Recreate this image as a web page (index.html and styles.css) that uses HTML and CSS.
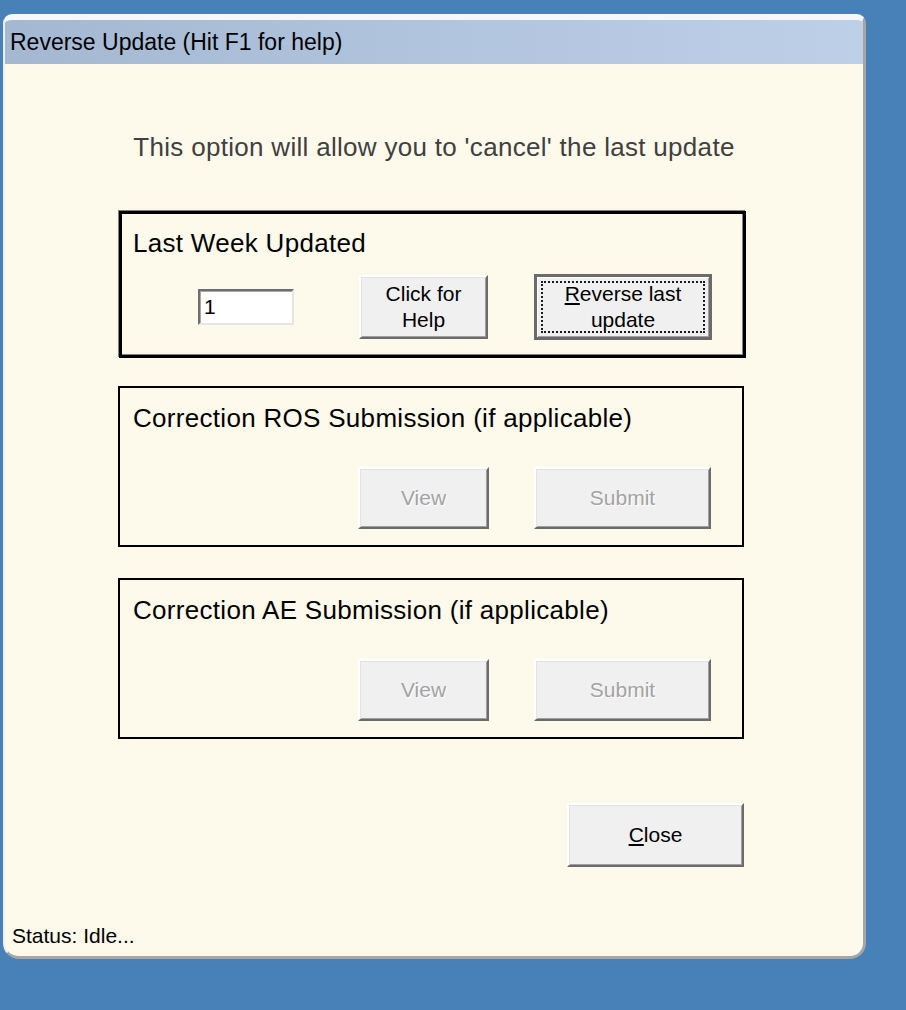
FILE: index.html
```html
<!DOCTYPE html>
<html>
<head>
<meta charset="utf-8">
<title>Reverse Update</title>
<link rel="stylesheet" href="styles.css">
</head>
<body>
<div class="window">
  <div class="titlebar">Reverse Update (Hit F1 for help)</div>
  <div class="client">
    <p class="intro">This option will allow you to 'cancel' the last update</p>

    <div class="group group-focus">
      <div class="group-label">Last Week Updated</div>
      <div class="row row-week">
        <div class="field">1</div>
        <button class="btn btn-help"><span>Click for<br>Help</span></button>
        <button class="btn btn-default"><span><u>R</u>everse last<br>update</span></button>
      </div>
    </div>

    <div class="group group-ros">
      <div class="group-label">Correction ROS Submission (if applicable)</div>
      <div class="row row-sub">
        <button class="btn btn-view" disabled><span>View</span></button>
        <button class="btn btn-submit" disabled><span>Submit</span></button>
      </div>
    </div>

    <div class="group group-ae">
      <div class="group-label">Correction AE Submission (if applicable)</div>
      <div class="row row-sub">
        <button class="btn btn-view" disabled><span>View</span></button>
        <button class="btn btn-submit" disabled><span>Submit</span></button>
      </div>
    </div>

    <button class="btn btn-close"><span><u>C</u>lose</span></button>

    <div class="status">Status: Idle...</div>
  </div>
</div>
</body>
</html>
```
FILE: styles.css
```css
html, body {
  margin: 0;
  padding: 0;
}

body {
  width: 906px;
  height: 1010px;
  overflow: hidden;
  background: #4880b8;
  font-family: "Liberation Sans", Arial, sans-serif;
  color: #000;
}

.window {
  margin: 14px 0 0 3px;
  width: 863px;
  height: 945px;
  box-sizing: border-box;
  background: #fefaeb;
  border-top: 6px solid #f7f7f7;
  border-left: 2px solid #f0f0f0;
  border-right: 3px solid #a6a6a6;
  border-bottom: 3px solid #a6a6a6;
  border-radius: 9px 9px 16px 16px;
  display: flex;
  flex-direction: column;
  overflow: hidden;
}

.titlebar {
  height: 44px;
  flex: none;
  display: flex;
  align-items: center;
  padding-left: 5px;
  background: linear-gradient(to right, #a5b8d2, #bdd0e8);
  font-size: 23px;
  color: #000;
  white-space: nowrap;
}

.client {
  flex: 1;
  display: flex;
  flex-direction: column;
  align-items: flex-start;
}

.intro {
  align-self: stretch;
  margin: 68px 0 0;
  font-size: 26px;
  line-height: 30px;
  letter-spacing: 0.3px;
  color: #404040;
  text-align: center;
}

.group {
  box-sizing: border-box;
  margin-left: 113px;
  width: 626px;
  border: 2px solid #000;
  padding: 15px 0 16px 0;
}

.group-label {
  font-size: 26px;
  line-height: 30px;
  letter-spacing: 0.3px;
  padding-left: 13px;
  white-space: nowrap;
}

.group-focus {
  margin-top: 49px;
  margin-left: 114px;
  width: 627px;
  border-width: 3px;
  padding-top: 14px;
  box-shadow: -1px -1px 0 #808080, inset -1px -1px 0 #808080;
}

.group-focus .group-label {
  padding-left: 11px;
}

.group-ros {
  margin-top: 28px;
}

.group-ae {
  margin-top: 31px;
}

.row {
  display: flex;
  align-items: center;
}

.row-week {
  margin-top: 17px;
  height: 64px;
}

.row-sub {
  margin-top: 34px;
  padding-left: 238px;
  gap: 45px;
}

.field {
  box-sizing: border-box;
  margin-left: 76px;
  width: 96px;
  height: 36px;
  background: #fff;
  border: 2px solid;
  border-color: #6e6e6e #e6e6e6 #e6e6e6 #6e6e6e;
  box-shadow: inset 1px 1px 0 #a8a8a8;
  padding-left: 4px;
  font-size: 21px;
  line-height: 32px;
}

.btn {
  box-sizing: border-box;
  margin: 0;
  padding: 0;
  background: #f0f0f0;
  border: 2px solid;
  border-color: #ffffff #6b6b6b #6b6b6b #ffffff;
  box-shadow: inset 1px 1px 0 #e3e3e3, inset -1px -1px 0 #a0a0a0;
  font-family: "Liberation Sans", Arial, sans-serif;
  font-size: 21px;
  line-height: 26px;
  color: #000;
  text-align: center;
  display: flex;
  align-items: center;
  justify-content: center;
  flex: none;
}

.btn:disabled {
  color: #a3a3a3;
  text-shadow: 1px 1px 0 #ffffff;
}

.btn-help {
  margin-left: 65px;
  width: 129px;
  height: 64px;
}

.btn-default {
  margin-left: 46px;
  width: 178px;
  height: 66px;
  border: 3px solid #6b6b6b;
  box-shadow: inset 1px 1px 0 #ffffff, inset -1px -1px 0 #a0a0a0;
  outline: 2px dotted #1a1a1a;
  outline-offset: -9px;
}

.btn-view {
  width: 131px;
  height: 62px;
}

.btn-submit {
  width: 177px;
  height: 62px;
}

.btn-close {
  margin-top: 64px;
  margin-left: 562px;
  width: 177px;
  height: 64px;
}

.status {
  margin-top: auto;
  padding: 0 0 8px 7px;
  font-size: 21px;
  line-height: 24px;
  white-space: nowrap;
}
```
